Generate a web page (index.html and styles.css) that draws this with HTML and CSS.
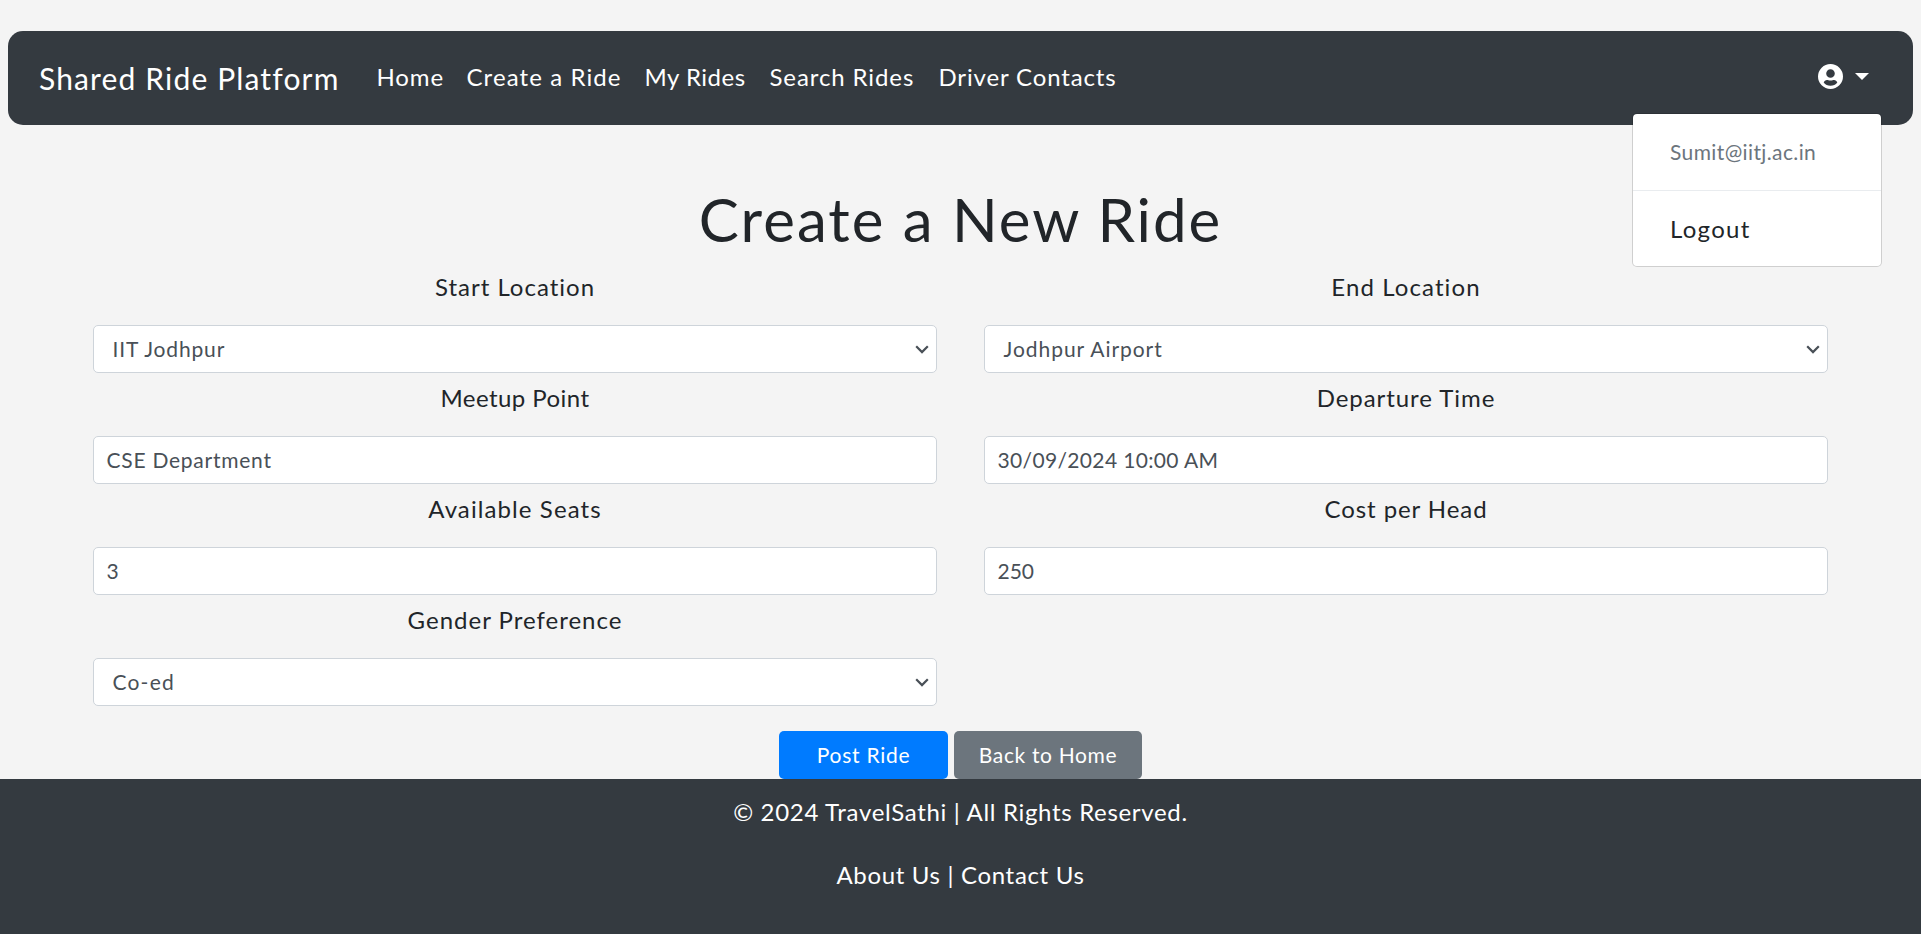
FILE: index.html
```html
<!DOCTYPE html>
<html lang="en">
<head>
<meta charset="utf-8">
<title>Create a New Ride</title>
<link rel="stylesheet" href="styles.css">
</head>
<body>
<nav class="navbar">
  <a class="brand">Shared Ride Platform</a>
  <ul class="nav-links">
    <li class="n-home">Home</li>
    <li class="n-create">Create a Ride</li>
    <li class="n-my">My Rides</li>
    <li class="n-search">Search Rides</li>
    <li class="n-driver">Driver Contacts</li>
  </ul>
  <div class="account">
    <svg class="user-icon" viewBox="0 0 25 25"><path fill="#fff" fill-rule="evenodd" d="M12.500 0a12.500 12.500 0 1 1 0 25a12.500 12.500 0 0 1 0-25zM12.500 5.200a4.300 4.300 0 1 0 0 8.600a4.300 4.300 0 0 0 0-8.600zM9 15.900c-1.500 0-2.700 1.100-3.300 2.500c1.600 2.100 4.100 3.300 6.800 3.300s5.200-1.200 6.800-3.300c-.6-1.400-1.800-2.500-3.300-2.500c-1 0-1.700.6-3.500.6s-2.500-.6-3.500-.6z"/></svg>
    <span class="caret"></span>
    <div class="menu">
      <div class="email">Sumit@iitj.ac.in</div>
      <div class="logout">Logout</div>
    </div>
  </div>
</nav>
<main class="content">
  <h1 class="title">Create a New Ride</h1>
  <form class="grid">
    <div class="field"><label class="l-start">Start Location</label>
      <div class="control select v-iit">IIT Jodhpur<svg class="chev" viewBox="0 0 14 9"><path d="M1.200 1.300L7 7.100L12.800 1.300"/></svg></div></div>
    <div class="field"><label class="l-end">End Location</label>
      <div class="control select v-air">Jodhpur Airport<svg class="chev" viewBox="0 0 14 9"><path d="M1.200 1.300L7 7.100L12.800 1.300"/></svg></div></div>
    <div class="field"><label class="l-meet">Meetup Point</label>
      <div class="control v-cse">CSE Department</div></div>
    <div class="field"><label class="l-dep">Departure Time</label>
      <div class="control v-date">30/09/2024 10:00 AM</div></div>
    <div class="field"><label class="l-seats">Available Seats</label>
      <div class="control">3</div></div>
    <div class="field"><label class="l-cost">Cost per Head</label>
      <div class="control">250</div></div>
    <div class="field"><label class="l-gender">Gender Preference</label>
      <div class="control select v-coed">Co-ed<svg class="chev" viewBox="0 0 14 9"><path d="M1.200 1.300L7 7.100L12.800 1.300"/></svg></div></div>
  </form>
  <div class="actions">
    <button class="btn post">Post Ride</button>
    <button class="btn back">Back to Home</button>
  </div>
</main>
<footer class="footer">
  <p class="copy">© 2024 TravelSathi | All Rights Reserved.</p>
  <p class="links">About Us | Contact Us</p>
</footer>
</body>
</html>
```
FILE: styles.css
```css
* { box-sizing: border-box; }

body {
  margin: 0;
  height: 934px;
  overflow: hidden;
  display: flex;
  flex-direction: column;
  background: #f4f4f4;
  color: #212529;
  font-family: Lato, "Liberation Sans", sans-serif;
  font-size: 24px;
}

.navbar {
  display: flex;
  align-items: center;
  flex: none;
  height: 94px;
  margin: 31px 8px 0;
  padding: 0 44px 0 31px;
  border-radius: 15px;
  background: #343a40;
  color: #fff;
  white-space: nowrap;
}

.brand { width: 337.500px; font-size: 30px; line-height: 36px; letter-spacing: 1.150px; }

.nav-links {
  display: flex;
  flex: 1;
  margin: 0;
  padding: 0 0 2px;
  list-style: none;
  line-height: 36px;
}

.n-home { width: 90px; letter-spacing: .9px; }
.n-create { width: 178px; letter-spacing: 1.100px; }
.n-my { width: 125px; letter-spacing: .5px; }
.n-search { width: 169px; letter-spacing: .9px; }
.n-driver { letter-spacing: .85px; }

.account { position: relative; display: flex; align-items: center; padding-bottom: 4px; }
.user-icon { width: 25px; height: 25px; margin-right: 12px; }
.caret {
  border-top: 7px solid #fff;
  border-left: 7px solid transparent;
  border-right: 7px solid transparent;
}

.menu {
  position: absolute;
  top: 49px;
  right: -13px;
  width: 250px;
  height: 154px;
  border: 1px solid rgba(0, 0, 0, .15);
  border-radius: 5px;
  background: #fff;
  background-clip: padding-box;
  color: #212529;
}
.email {
  height: 77px;
  padding-left: 37px;
  border-bottom: 1px solid #e9ecef;
  color: #6c757d;
  font-size: 21px;
  line-height: 76px;
  letter-spacing: .38px;
}
.logout { padding-left: 37px; line-height: 75px; letter-spacing: 1.300px; }

.content { flex: none; padding: 0 93px; height: 654px; text-align: center; }
.title {
  margin: 0;
  height: 133px;
  padding-top: 58px;
  font-size: 60px;
  font-weight: 400;
  line-height: 72px;
  letter-spacing: 2px;
}

.grid { display: grid; grid-template-columns: 1fr 1fr; column-gap: 47px; }
.field { height: 111px; }
label { display: block; height: 67px; padding-top: 11px; line-height: 36px; }
.l-start, .l-gender { letter-spacing: 1px; }
.l-end, .l-seats { letter-spacing: 1.100px; }
.l-meet { letter-spacing: .45px; }
.l-dep, .l-cost { letter-spacing: .93px; }

.control {
  position: relative;
  height: 48px;
  padding-left: 12.500px;
  border: 1px solid #ced4da;
  border-radius: 5px;
  background: #fff;
  color: #495057;
  font-size: 21px;
  line-height: 45px;
  text-align: left;
}
.select { padding-left: 18.500px; }
.v-iit { letter-spacing: .85px; }
.v-air { letter-spacing: .95px; }
.v-cse { letter-spacing: .75px; }
.v-date { letter-spacing: .35px; }
.v-coed { letter-spacing: 1.200px; }
.chev {
  position: absolute;
  top: 19px;
  right: 7px;
  width: 14px;
  height: 9px;
  fill: none;
  stroke: #495057;
  stroke-width: 2.200;
}

.actions { display: flex; justify-content: center; gap: 6px; padding-top: 29px; }
.btn {
  height: 48px;
  padding: 0;
  border: 0;
  border-radius: 5px;
  color: #fff;
  font: 21px/48px Lato, sans-serif;
}
.post { width: 169px; background: #007bff; letter-spacing: .75px; }
.back { width: 188px; background: #6c757d; letter-spacing: .65px; }

.footer { flex: 1; background: #343a40; color: #fff; text-align: center; }
.footer p { margin: 0; line-height: 36px; }
.copy { padding-top: 15px; letter-spacing: .68px; }
.footer .links { padding-top: 27px; letter-spacing: .67px; }
```
